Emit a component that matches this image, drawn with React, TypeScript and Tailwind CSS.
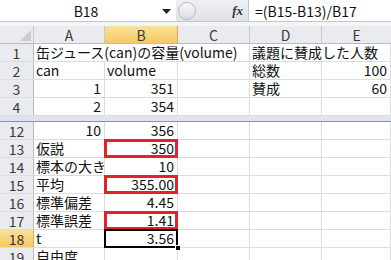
import React from 'react'

type CellProps = {
  w: string
  right?: boolean
  clip?: boolean
  box?: 'red' | 'sel'
  children?: React.ReactNode
}

function Cell({ w, right, clip, box, children }: CellProps) {
  return (
    <div
      className={`relative h-full shrink-0 border-r border-[#dadcdd] flex items-end pb-[1px] whitespace-nowrap ${w} ${
        right ? 'justify-end pr-[3px]' : 'pl-[2px]'
      } ${clip ? 'overflow-hidden' : ''}`}
    >
      <span className="leading-[16px]">{children}</span>
      {box === 'red' && (
        <div className="absolute z-10 -top-[1px] -left-[1px] -right-[1px] -bottom-[1px] border-[3px] border-[#e4212b]" />
      )}
      {box === 'sel' && (
        <>
          <div className="absolute z-10 -top-[1px] -left-[1px] -right-[1px] -bottom-[1px] border-2 border-black" />
          <div className="absolute z-20 -right-[4px] -bottom-[4px] w-[6px] h-[6px] bg-black border border-white" />
        </>
      )}
    </div>
  )
}

function RowHead({ n, active }: { n: number; active?: boolean }) {
  return (
    <div
      className={`w-[34px] h-full shrink-0 flex items-center justify-center leading-[16px] border-r ${
        active
          ? 'bg-gradient-to-b from-[#fbe09a] to-[#f5c962] border-[#e2a94a] text-[#333]'
          : 'bg-[#e9ebee] border-[#b7bcc2] text-[#3c3c3c]'
      }`}
    >
      {n}
    </div>
  )
}

function Row({ n, active, children }: { n: number; active?: boolean; children?: React.ReactNode }) {
  return (
    <div className="flex h-[18px] border-b border-[#dadcdd]">
      <RowHead n={n} active={active} />
      {children}
    </div>
  )
}

export default function App() {
  return (
    <div className="w-[391px] h-[260px] overflow-hidden bg-white text-[14px] text-[#111] font-['Noto_Sans_CJK_JP','Noto_Sans',sans-serif]">
      {/* 数式バー */}
      <div className="flex h-[22px] border-b border-[#c3c7cc]">
        <div className="relative w-[176px] shrink-0 flex items-center justify-center bg-white">
          <span className="-ml-[4px] leading-[16px]">B18</span>
          <svg className="absolute right-[5px] top-[9px]" width="9" height="5" viewBox="0 0 9 5">
            <path d="M0 0h9L4.5 5z" fill="#222" />
          </svg>
        </div>
        <div className="relative w-[73px] shrink-0 flex items-center justify-end pr-[3px] bg-gradient-to-b from-[#eef0f3] to-[#dfe2e6] border-r border-[#c3c7cc]">
          <div className="absolute left-[2px] top-[2px] w-[18px] h-[18px] rounded-full border border-[#b9bdc3] bg-gradient-to-b from-[#f7f8f9] to-[#d9dce0]" />
          <span className="font-['Liberation_Serif',serif] italic font-bold text-[13px] leading-[16px] text-[#333] mr-[2px]">fx</span>
        </div>
        <div className="flex-1 flex items-center pl-[6px] bg-white whitespace-nowrap leading-[16px]">=(B15-B13)/B17</div>
      </div>
      <div className="h-[4px] bg-[#f3f4f6]" />

      {/* 列見出し */}
      <div className="flex h-[18px] border-b border-[#b7bcc2] text-[#3c3c3c] leading-[16px]">
        <div className="relative w-[34px] shrink-0 bg-[#e9ebee] border-r border-[#c6cace]">
          <svg className="absolute right-[2px] bottom-[2px]" width="11" height="11" viewBox="0 0 11 11">
            <path d="M11 0v11H0z" fill="#c9ccd1" />
          </svg>
        </div>
        <div className="w-[71px] shrink-0 flex items-center justify-center bg-[#e9ebee] border-r border-[#c6cace]">A</div>
        <div className="w-[73px] shrink-0 flex items-center justify-center bg-gradient-to-b from-[#fbe09a] to-[#f5c962] border-r border-[#e2a94a]">B</div>
        <div className="w-[72px] shrink-0 flex items-center justify-center bg-[#e9ebee] border-r border-[#c6cace]">C</div>
        <div className="w-[72px] shrink-0 flex items-center justify-center bg-[#e9ebee] border-r border-[#c6cace]">D</div>
        <div className="flex-1 flex items-center justify-center bg-[#e9ebee]">E</div>
      </div>

      <Row n={1}>
        <Cell w="w-[216px]">缶ジュース(can)の容量(volume)</Cell>
        <Cell w="w-[141px]">議題に賛成した人数</Cell>
      </Row>
      <Row n={2}>
        <Cell w="w-[71px]">can</Cell>
        <Cell w="w-[73px]">volume</Cell>
        <Cell w="w-[72px]" />
        <Cell w="w-[72px]">総数</Cell>
        <Cell w="w-[69px]" right>100</Cell>
      </Row>
      <Row n={3}>
        <Cell w="w-[71px]" right>1</Cell>
        <Cell w="w-[73px]" right>351</Cell>
        <Cell w="w-[72px]" />
        <Cell w="w-[72px]">賛成</Cell>
        <Cell w="w-[69px]" right>60</Cell>
      </Row>
      <Row n={4}>
        <Cell w="w-[71px]" right>2</Cell>
        <Cell w="w-[73px]" right>354</Cell>
        <Cell w="w-[72px]" />
        <Cell w="w-[72px]" />
        <Cell w="w-[69px]" />
      </Row>

      {/* ウィンドウ分割 */}
      <div className="h-[6px] bg-[#dfe3f0] border-b border-[#8f939a]" />

      <Row n={12}>
        <Cell w="w-[71px]" right>10</Cell>
        <Cell w="w-[73px]" right>356</Cell>
        <Cell w="w-[72px]" />
        <Cell w="w-[72px]" />
        <Cell w="w-[69px]" />
      </Row>
      <Row n={13}>
        <Cell w="w-[71px]">仮説</Cell>
        <Cell w="w-[73px]" right box="red">350</Cell>
        <Cell w="w-[72px]" />
        <Cell w="w-[72px]" />
        <Cell w="w-[69px]" />
      </Row>
      <Row n={14}>
        <Cell w="w-[71px]" clip>標本の大きさ</Cell>
        <Cell w="w-[73px]" right>10</Cell>
        <Cell w="w-[72px]" />
        <Cell w="w-[72px]" />
        <Cell w="w-[69px]" />
      </Row>
      <Row n={15}>
        <Cell w="w-[71px]">平均</Cell>
        <Cell w="w-[73px]" right box="red">355.00</Cell>
        <Cell w="w-[72px]" />
        <Cell w="w-[72px]" />
        <Cell w="w-[69px]" />
      </Row>
      <Row n={16}>
        <Cell w="w-[71px]">標準偏差</Cell>
        <Cell w="w-[73px]" right>4.45</Cell>
        <Cell w="w-[72px]" />
        <Cell w="w-[72px]" />
        <Cell w="w-[69px]" />
      </Row>
      <Row n={17}>
        <Cell w="w-[71px]">標準誤差</Cell>
        <Cell w="w-[73px]" right box="red">1.41</Cell>
        <Cell w="w-[72px]" />
        <Cell w="w-[72px]" />
        <Cell w="w-[69px]" />
      </Row>
      <Row n={18} active>
        <Cell w="w-[71px]">t</Cell>
        <Cell w="w-[73px]" right box="sel">3.56</Cell>
        <Cell w="w-[72px]" />
        <Cell w="w-[72px]" />
        <Cell w="w-[69px]" />
      </Row>
      <Row n={19}>
        <Cell w="w-[71px]">自由度</Cell>
        <Cell w="w-[73px]" />
        <Cell w="w-[72px]" />
        <Cell w="w-[72px]" />
        <Cell w="w-[69px]" />
      </Row>
    </div>
  )
}
